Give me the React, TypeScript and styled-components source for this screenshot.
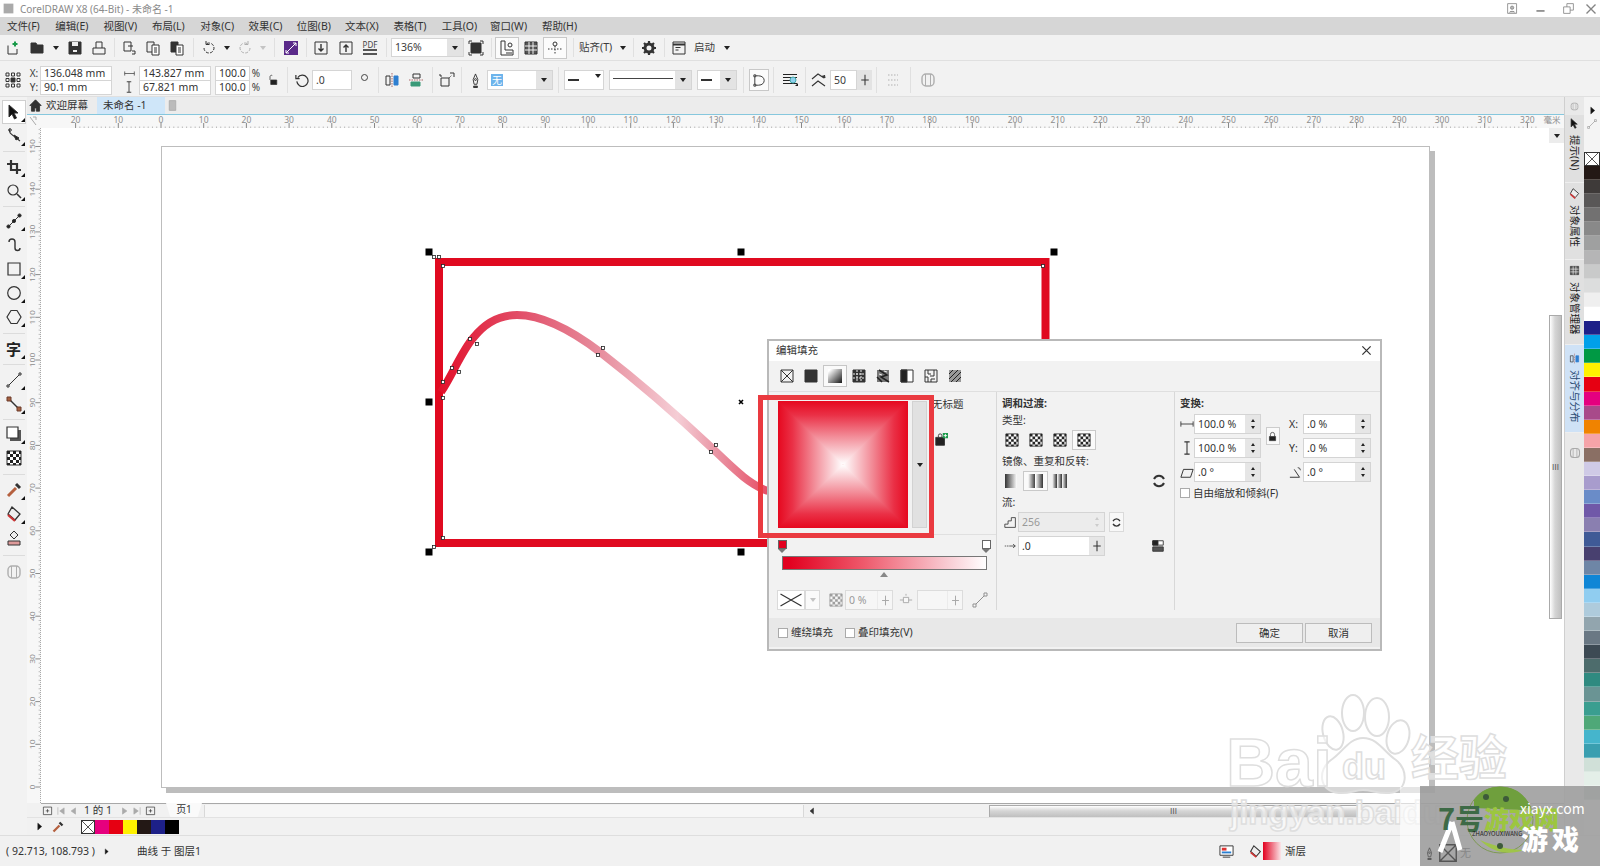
import React, { ReactNode } from "react";
import styled, { createGlobalStyle } from "styled-components";

const Global = createGlobalStyle`
  html, body { margin: 0; padding: 0; background: #fff; overflow: hidden; }
  #root { width: 1600px; height: 866px; }
  * { box-sizing: border-box; }
`;

const FONT = `"Noto Sans", "Noto Sans CJK SC", sans-serif`;

const App_ = styled.div`
  position: relative; width: 1600px; height: 866px; overflow: hidden;
  display: flex; flex-direction: column;
  font: 10.5px/1.2 ${FONT}; color: #3c3c3c; background: #f1f1f1;
`;

/* ------- icons ------- */
const G: Record<string, ReactNode> = {
  app: <path d="M2 2h12v12H2z" fill="#aaa" stroke="none" />,
  new: <><path d="M3 5.5V14h9V9" /><path d="M10 1.5v5M7.5 4h5" stroke="#1a9a4a" strokeWidth="2" /></>,
  open: <path d="M2 13V3h5l1 2h6v8z" fill="#333" />,
  save: <><path d="M2 2h12v12H2z" fill="#333" /><path d="M5 2h6v4H5z" fill="#eee" stroke="none" /><path d="M6 10h4v2H6z" fill="#eee" stroke="none" /></>,
  print: <><path d="M5 8V2h6v6" /><path d="M2 8h12v6H2z" /></>,
  cut: <><path d="M3 2h7v9H3z" /><path d="M7 6h5" /><path d="M11 11h3v3h-3" /></>,
  copy: <><path d="M2 2h7v10H2z" fill="#eee" /><path d="M7 5h7v10H7z" fill="#fff" /><path d="M9 8h3M9 10h3M9 12h3" /></>,
  paste: <><path d="M2 2h7v10H2z" fill="#333" /><path d="M7 5h7v10H7z" fill="#fff" /><path d="M9 8h3M9 10h3M9 12h3" /></>,
  undo: <><path d="M3 8a5 5 0 1 0 2-4" strokeDasharray="3 1.4" /><path d="M5 1v3.5H8.5" /></>,
  redo: <g opacity=".35"><path d="M13 8a5 5 0 1 1-2-4" strokeDasharray="3 1.4" /><path d="M11 1v3.5H7.5" /></g>,
  purple: <><path d="M1 1h14v14H1z" fill="#5a2a8a" stroke="none" /><path d="M3 13l10-10M10 3h3v3M3 10v3h3" stroke="#fff" /></>,
  imp: <><path d="M2 2h12v12H2z" /><path d="M8 4v7M5.5 8.5L8 11l2.5-2.5" strokeWidth="1.4" /></>,
  exp: <><path d="M2 2h12v12H2z" /><path d="M8 12V5M5.5 7.5L8 5l2.5 2.5" strokeWidth="1.4" /></>,
  full: <><path d="M3 3h10v10H3z" fill="#333" /><path d="M1 4V1h3M12 1h3v3M15 12v3h-3M4 15H1v-3" /></>,
  rulers: <><path d="M2 1v14h12v-5H6V1z" /><path d="M8 12v2M10 12v2M12 12v2" /><circle cx="11" cy="5" r="2" /></>,
  grid: <><path d="M2 2h12v12H2z" fill="#555" /><path d="M6 2v12M10 2v12M2 6h12M2 10h12" stroke="#f2f2f2" /></>,
  guides: <><path d="M1 9h14M8 6v9" strokeDasharray="1.5 1.5" /><circle cx="8" cy="4" r="2" /></>,
  gear: <><circle cx="8" cy="8" r="4" strokeWidth="3" /><path d="M8 1v2M8 13v2M1 8h2M13 8h2M3 3l1.5 1.5M11.5 11.5L13 13M13 3l-1.5 1.5M4.5 11.5L3 13" strokeWidth="2.2" /></>,
  launch: <><path d="M2 2h12v12H2z" /><path d="M2 4.5h12" strokeWidth="2" /><path d="M4.5 7.5h5M4.5 10h3" /></>,
  origin: <><path d="M1 1h3v3H1zM6.5 1h3v3h-3zM12 1h3v3h-3zM1 6.5h3v3H1zM12 6.5h3v3h-3zM1 12h3v3H1zM6.5 12h3v3h-3zM12 12h3v3h-3z" /><path d="M6 6h4v4H6z" fill="#333" /></>,
  wArrow: <path d="M1 5v6M15 5v6M1 8h14" />,
  hArrow: <path d="M5 1h6M5 15h6M8 1v14" strokeWidth="1.2" />,
  unlock: <><path d="M4 8V4a2 2 0 0 1 3-2" /><path d="M5 8h8v6H5z" fill="#222" /></>,
  lock: <><path d="M5 8V5a3 3 0 0 1 6 0v3" /><path d="M3.5 8h9v6h-9z" fill="#222" /></>,
  rotate: <><path d="M4 5a6 6 0 1 1-1 4" strokeWidth="1.3" /><path d="M2 2v4h4" strokeWidth="1.3" /></>,
  mirH: <><path d="M2 4h4v9H2z" /><path d="M10 4h4v9h-4z" fill="#2f7fd0" stroke="#2f7fd0" /><path d="M8 1v14" strokeDasharray="1.5 1" stroke="#a66" /></>,
  mirV: <><path d="M5 2h7v4H5z" /><path d="M3 10h9v4H3z" fill="#3a9a78" stroke="#3a9a78" /><path d="M1 8h14" strokeDasharray="1.5 1" stroke="#a66" /></>,
  conv: <><path d="M2 6h8v8H2z" /><path d="M11 1h4v4M1 2v2h2" /><path d="M10 6l3-3" strokeDasharray="1 1" /></>,
  pen: <><path d="M8 1l2.5 6-1 5h-3l-1-5z" /><path d="M6 14h4v1.5H6z" fill="#333" /><circle cx="8" cy="7" r="1" /></>,
  end: <><path d="M3 3h4c4 0 6 2.5 6 5s-2 5-6 5H3z" /><path d="M2 2h2v2H2zM2 12h2v2H2z" fill="#eee" /></>,
  wrap: <><path d="M1 2.5h14M1 5.5h14M1 8.5h8M1 11.5h14" stroke="#222" /><circle cx="11" cy="8" r="3" fill="#8fd0ee" stroke="#4aa" /><path d="M13 14h3v-3z" fill="#222" stroke="none" /></>,
  curve: <><path d="M1 7l6-5 6 4" strokeWidth="1.1" /><path d="M1 14l6-5 7 5" strokeWidth="1.1" /><path d="M11 4l3 2-.5-3" fill="#333" /></>,
  plusV: <path d="M8 1v14M3 8h10" strokeWidth="1.4" />,
  dots: <g opacity=".35" strokeDasharray="1.5 1.5"><path d="M3 3h10M3 8h10M3 13h10" /></g>,
  cyl: <g opacity=".35"><rect x="2" y="2" width="12" height="12" rx="4" strokeWidth="1.4" /><path d="M5.5 2v12M10.5 2v12" /></g>,
  pointer: <path d="M3 1l9 8H8l2.5 5-2 1L6 10l-3 3z" fill="#111" />,
  shape: <><path d="M4 1c-2 3 1 5 5 8l5 4" strokeWidth="1.1" /><circle cx="4" cy="2" r="1.3" /><path d="M8 7l5 3-3 2z" fill="#222" /></>,
  crop: <path d="M5 1v10h10M1 5h10v10" strokeWidth="2.2" />,
  zoom: <><circle cx="7" cy="7" r="5" strokeWidth="1.2" /><path d="M11 11l4 4" strokeWidth="1.6" /></>,
  bez: <><path d="M2 14L14 2" /><circle cx="2.5" cy="13.5" r="1.6" fill="#222" /><circle cx="8" cy="8" r="1.6" fill="#222" /><circle cx="13.5" cy="2.5" r="1.6" fill="#222" /></>,
  art: <path d="M3 5a3 3 0 0 1 6 0v6a2.5 2.5 0 0 0 5 0" strokeWidth="1.4" />,
  rect: <><path d="M2 2h12v12H2z" strokeWidth="1.2" /></>,
  ell: <circle cx="8" cy="8" r="6.3" strokeWidth="1.2" />,
  poly: <path d="M5 1.5h6L15 8l-4 6.5H5L1 8z" strokeWidth="1.2" />,
  line: <><path d="M2 14L14 2" /><path d="M1 13h2v2H1zM13 1h2v2h-2z" fill="#fff" /></>,
  conn: <><path d="M3 3l10 10" strokeWidth="1.4" /><path d="M1 1h4v4H1zM11 11h4v4h-4z" fill="#a5603f" stroke="#6b3a2a" /></>,
  shadow: <><path d="M4 4h11v11H4z" fill="#555" stroke="none" /><path d="M1 1h11v11H1z" fill="#fff" strokeWidth="1.2" /></>,
  checker: <><path d="M1 1h14v14H1z" fill="#fff" /><path d="M1 1h3v3H1zM7 1h3v3H7zM13 1h2v3h-2zM4 4h3v3H4zM10 4h3v3h-3zM1 7h3v3H1zM7 7h3v3H7zM13 7h2v3h-2zM4 10h3v3H4zM10 10h3v3h-3zM1 13h3v2H1zM7 13h3v2H7zM13 13h2v2h-2z" fill="#222" stroke="none" /></>,
  dropper: <><path d="M2 14l8-8" stroke="#b5603f" strokeWidth="3" /><path d="M10 2l4 4" strokeWidth="3" stroke="#333" /></>,
  fill: <><path d="M6 1l8 7-5 6-7-6z" fill="#eee" strokeWidth="1.3" /><path d="M2 9l7 6" stroke="#c33" strokeWidth="2.2" /></>,
  smart: <><path d="M8 1l4 4-4 4-4-4z" fill="#eee" /><path d="M2 11h12v4H2z" fill="#d99" /></>,
  x: <path d="M2 2h12v12H2zM2 2l12 12M14 2L2 14" />,
  solid: <path d="M2 2h12v12H2z" fill="#333" />,
  pattern: <><path d="M2 2h12v12H2z" fill="#333" /><path d="M2 6h12M2 10h12" stroke="#eee" strokeDasharray="2 1" /><path d="M6 2v12M10 2v12" stroke="#eee" strokeDasharray="2 1" /></>,
  bitmap: <><path d="M2 2h12v12H2z" fill="#777" stroke="none" /><path d="M4 2l8 5-6 2 8 5M2 9l5 5" stroke="#222" strokeWidth="1.5" /><path d="M9 3l3 1M4 6l3 1" stroke="#eee" /></>,
  half: <><path d="M2 2h12v12H2z" fill="#fff" /><path d="M2 2h6v12H2z" fill="#222" /></>,
  maze: <><path d="M2 2h12v12H2z" /><path d="M5 2v4h3M11 2v6H7M2 9h3v5M8 14v-3h4" /></>,
  hatch: <><path d="M2 2h12v12H2z" fill="#999" stroke="none" /><path d="M2 6l4-4M2 11l9-9M4 14L14 4M9 14l5-5" stroke="#222" /></>,
  spinCircle: <><path d="M3 6a5.5 5.5 0 0 1 10 0" strokeWidth="2" /><path d="M13 10a5.5 5.5 0 0 1-10 0" strokeWidth="2" /></>,
  blend: <><path d="M2 2h12v5H2z" fill="#fff" /><path d="M2 2h6v5H2z" fill="#222" /><path d="M2 9h12v5H2z" fill="#555" /></>,
  steps: <path d="M1 14V10h4V6h4V2h5v12z" />,
  flow: <path d="M1 8h2M4 8h2M7 8h8M12 5.5L15 8l-3 2.5" />,
  skew: <path d="M4 5h11l-3 9H1z" strokeWidth="1.1" />,
  ang: <><path d="M1 14h11L6 5" strokeWidth="1.1" /><path d="M10 3a3 3 0 0 1 3 3" /></>,
  node: <><path d="M1 8h14" /><path d="M5 5h6v6H5z" fill="#fff" /><path d="M8 1v2" /></>,
  tie: <g opacity=".5"><path d="M2 14L14 2" /><path d="M1 12h3v3H1zM12 1h3v3h-3z" fill="#fff" /></g>,
  bag: <><path d="M2 5h10v9H2z" fill="#222" /><path d="M5 5V3a2 2 0 0 1 4 0v2" /><path d="M10 0h6v6h-6z" fill="#1a9a4a" stroke="none" /><path d="M13 1v4M11 3h4" stroke="#fff" /></>,
  home: <path d="M8 1L1 8h2v7h4v-4h2v4h4V8h2z" fill="#333" />,
  tabBox: <path d="M4 2h8v12H4z" fill="#bbb" stroke="#aaa" />,
  user: <><path d="M2 2h11v12H2z" /><circle cx="7.5" cy="7" r="2" fill="#888" /><path d="M4 13c0-2 7-2 7 0" fill="#888" /></>,
  min: <path d="M3 11h10" strokeWidth="2" />,
  restore: <><path d="M6 2h8v8H6z" /><path d="M2 6h8v8H2z" fill="#fff" /></>,
  close: <path d="M2 2l12 12M14 2L2 14" strokeWidth="1.8" />,
  cross: <path d="M1 4l14 8M15 4L1 12" strokeWidth=".8" />,
  navAdd: <><path d="M2 3h12v11H2z" /><path d="M8 6v5M5.5 8.5h5" /></>,
  first: <path d="M3 2v12M13 3L6 8l7 5z" fill="#aaa" stroke="#aaa" />,
  prev: <path d="M12 3L5 8l7 5z" fill="#aaa" stroke="#aaa" />,
  next: <path d="M4 3l7 5-7 5z" fill="#aaa" stroke="#aaa" />,
  last: <path d="M13 2v12M3 3l7 5-7 5z" fill="#aaa" stroke="#aaa" />,
  right: <path d="M5 2l7 6-7 6z" fill="#111" />,
  left: <path d="M11 2L4 8l7 6z" fill="#333" />,
  monitor: <><path d="M1 2h14v10H1z" fill="#fff" stroke="#333" /><path d="M3 4h5v3H3z" fill="#d33" stroke="none" /><path d="M3 8h10v2H3z" fill="#2a7fd0" stroke="none" /><path d="M4 14h8" /></>,
};

const Svg = styled.svg<{ $s: number; $m: string }>`
  width: ${p => p.$s}px; height: ${p => p.$s}px; flex: none; display: block;
  margin: ${p => p.$m};
  fill: none; stroke: #333; stroke-width: 1;
`;
const Icon = ({ n, s = 16, m = "0" }: { n: string; s?: number; m?: string }) => (
  <Svg $s={s} $m={m} viewBox="0 0 16 16">{G[n]}</Svg>
);

/* ------- title & menu ------- */
const TitleBar = styled.div`
  height: 17px; background: #fff; display: flex; align-items: center; padding-left: 2px; color: #8a8a8a; font-size: 10px;
  span { margin-left: 5px; flex: 1; }
`;
const WinBtn = styled.div<{ $w: number }>`
  width: ${p => p.$w}px; display: flex; justify-content: center; align-items: center; opacity: .6;
`;
const MenuBar = styled.div`
  height: 18px; background: #d6d6d6; display: flex; align-items: center; padding-left: 7px; font-size: 10.5px; color: #333;
`;
const MenuItem = styled.div`
  width: 48.3px; white-space: nowrap;
  &:nth-last-child(2) { width: 52px; }
`;

/* ------- toolbars ------- */
const Toolbar = styled.div<{ $h: number; $pt?: number }>`
  height: ${p => p.$h}px; background: #f2f2f2; display: flex; align-items: center; padding: ${p => p.$pt ?? 0}px 0 0 1px;
  border-bottom: 1px solid #e0e0e0; flex: none;
`;
const Btn = styled.div<{ $w?: number; $on?: boolean }>`
  width: ${p => p.$w ?? 24}px; height: 22px; flex: none; display: flex; align-items: center; justify-content: center;
  box-sizing: border-box;
  ${p => p.$on ? "background:#fbfbfb; box-shadow: inset 0 0 0 1px #c8c8c8;" : ""}
`;
const Caret = styled.i<{ $w?: number; $off?: boolean }>`
  width: ${p => p.$w ?? 12}px; flex: none; position: relative; height: 10px; display: block;
  &::after { content: ""; position: absolute; left: 50%; top: 3px; margin-left: -3px;
    border: 3px solid transparent; border-top: 4px solid ${p => p.$off ? "#c4c4c4" : "#222"}; border-bottom: 0; }
`;
const Sep = styled.i<{ $w: number; $none?: boolean }>`
  width: ${p => p.$w}px; flex: none; align-self: stretch; margin: 3px 0; display: block;
  background: ${p => p.$none ? "none" : "linear-gradient(#e0e0e0,#e0e0e0) center/1px 100% no-repeat"};
`;
const TbText = styled.span<{ $w: number; $ml?: number }>`
  width: ${p => p.$w}px; margin-left: ${p => p.$ml ?? 0}px; flex: none; font-size: 10.5px; white-space: nowrap;
`;
const Combo = styled.div<{ $w: number; $h?: number }>`
  width: ${p => p.$w}px; height: ${p => p.$h ?? 19}px; flex: none; display: flex; background: #fff;
  border: 1px solid #d5d5d5; font-size: 10.5px; align-items: stretch;
`;
const ComboText = styled.div`flex: 1; display: flex; align-items: center; padding-left: 3px; min-width: 0;`;
const ComboDrop = styled.div`
  width: 16px; background: #e3e3e3; display: flex; align-items: center; justify-content: center;
`;
const NoneChip = styled.span`background: #6db4ec; color: #fff; font-size: 10px; padding: 0 1px;`;
const Dash = styled.i`width: 11px; height: 2px; background: #333; display: block;`;
const LinePreview = styled.i`flex: 1; height: 1px; background: #444; display: block; margin: -4px 2px 0 0;`;
const Stack = styled.div<{ $w: number }>`
  width: ${p => p.$w}px; flex: none; display: flex; flex-direction: column;
`;
const StackLabel = styled.div`height: 14px; line-height: 14px; font-size: 10px; text-align: center; display: flex; justify-content: center; align-items: center;`;
const StackInput = styled.div`
  height: 15px; background: #fff; border: 1px solid #d5d5d5; margin-top: -1px; padding-left: 3px; line-height: 13px;
  font-size: 10.5px; white-space: nowrap; color: #333;
  &:first-child { margin-top: 0; }
`;
const PropInput = styled.div<{ $w: number }>`
  width: ${p => p.$w}px; height: 20px; background: #fff; border: 1px solid #d5d5d5; line-height: 18px; padding-left: 3px; flex: none; font-size: 10.5px;
`;
const PlusBox = styled.div`
  width: 15px; height: 20px; background: #e3e3e3; flex: none; display: flex; align-items: center; justify-content: center;
`;
const DegMark = styled.i`width: 7px; height: 7px; border: 1px solid #444; border-radius: 50%; display: block; margin-top: -6px;`;

/* ------- work area ------- */
const Work = styled.div`flex: 1; display: flex; min-height: 0;`;
const Toolbox = styled.div`
  width: 27px; flex: none; background: #f2f2f2; padding-top: 3px; display: flex; flex-direction: column; align-items: center;
`;
const ToolBtn = styled.div<{ $on?: boolean; $fly?: boolean }>`
  position: relative; width: 24px; height: 24px; flex: none; display: flex; align-items: center; justify-content: center;
  font-size: 15px; font-weight: 700; color: #222;
  ${p => p.$on ? "background:#fff; box-shadow: inset 0 0 0 1px #cfcfcf;" : ""}
  ${p => p.$fly ? `&::after { content:""; position:absolute; right:1px; bottom:2px; border-left:4px solid transparent; border-bottom:4px solid #111; }` : ""}
`;
const ToolSep = styled.i<{ $h: number }>`
  height: ${p => p.$h}px; width: 22px; flex: none; display: block;
  background: linear-gradient(#dcdcdc,#dcdcdc) center/100% 1px no-repeat;
`;
const Center = styled.div`
  flex: 1; min-width: 0; display: flex; flex-direction: column; border-right: 1px solid #cfcfcf;
`;
const TabBar = styled.div`
  height: 18px; background: #ececec; border-bottom: 1px solid #86c7dd; display: flex; align-items: center; flex: none;
`;
const DocTab = styled.div<{ $on?: boolean }>`
  height: 17px; display: flex; align-items: center; font-size: 10.5px; color: #333;
  ${p => p.$on ? "background:#cfe6f9; width: 68px; margin-left: 9px; padding-left: 6px" : "padding-left: 2px;"}
`;
const RulerRow = styled.div`height: 13px; flex: none; display: block; background: #f7f7f7;`;
const RulerSvg = styled.svg`
  display: block; width: 100%; height: 100%;
  text { font: 8.5px ${FONT}; fill: #8d8d8d; stroke: none; }
`;
const CanvasRow = styled.div`flex: 1; display: flex; min-height: 0; background: #fff;`;
const VRuler = styled.div`width: 14px; flex: none; background: #f7f7f7; border-right: 1px dotted #aaa;`;
const Canvas = styled.div`position: relative; flex: 1; min-width: 0; overflow: visible; background: #fff;`;
const VScroll = styled.div`
  width: 15px; flex: none; background: #fff; display: flex; flex-direction: column; align-items: stretch;
`;
const ScrollUp = styled.div`
  height: 15px; background: #ececec; display: flex; align-items: center; justify-content: center; margin-bottom: 172px;
`;
const ScrollThumb = styled.div`
  height: 304px; width: 13px; border: 1px solid #aaa;
  background: linear-gradient(90deg,#fff,#d5d5d5 45%,#c0c0c0);
  display: flex; align-items: center; justify-content: center; font-size: 8px; color: #555;
`;
const Page = styled.div`
  position: absolute; left: 120px; top: 18px; width: 1269px; height: 642px; background: #fff;
  border: 1px solid #bdbdbd; box-shadow: 5px 5px 0 #bdbdbd;
`;
const DrawingSvg = styled.svg`position: absolute; inset: 0; width: 100%; height: 100%; overflow: visible;`;

/* nav row */
const NavRow = styled.div`
  height: 14px; flex: none; background: #f1f1f1; border-top: 1px solid #a8a8a8; display: flex; align-items: center; margin-left: 14px; padding-left: 1px;
  font-size: 10.5px; color: #333;
`;
const PageTab = styled.div`
  width: 36px; height: 14px; margin-left: 10px; margin-top: -1px; background: #fafafa; text-align: center; line-height: 12px;
  clip-path: polygon(0 0, 100% 0, 88% 100%, 12% 100%); font-size: 10px;
`;
const HTrack = styled.div`
  width: 600px; height: 12px; margin-left: 2px; background: #f6f6f6; border: 1px solid #d8d8d8; border-width: 0 1px;
`;
const HArrow = styled.div`width: 16px; display: flex; justify-content: center;`;
const HThumbTrack = styled.div`flex: 1; height: 14px; padding-left: 169px; min-width: 0;`;
const HThumb = styled.div`
  width: 369px; height: 13px; border: 1px solid #aaa; background: linear-gradient(#fff,#d5d5d5 45%,#bfbfbf);
  font-size: 8px; text-align: center; line-height: 10px; color: #555; margin-top: 1px;
`;
const DocPal = styled.div`
  height: 18px; flex: none; background: #f1f1f1; border-top: 1px solid #e2e2e2; display: flex; align-items: center; padding-left: 8px;
`;
const Swatch = styled.i<{ $c: string }>`
  width: 14px; height: 14px; background: ${p => p.$c}; display: block; flex: none;
`;
const XSwatch = styled.div`width: 14px; height: 14px; border: 1px solid #333; flex: none; background:
  linear-gradient(45deg,transparent 48%,#555 48%,#555 52%,transparent 52%),
  linear-gradient(-45deg,transparent 48%,#555 48%,#555 52%,transparent 52%), #fff;`;

/* docker + palette */
const Docker = styled.div`
  width: 19px; flex: none; background: #e9e9e9; display: flex; flex-direction: column; align-items: center;
`;
const DockTop = styled.div`height: 18px; flex: none; display: flex; align-items: center; justify-content: center;`;
const DockTab = styled.div<{ $h: number; $on?: boolean }>`
  height: ${p => p.$h}px; width: 100%; flex: none; padding-top: 3px; display: flex; flex-direction: column; align-items: center; gap: 1px;
  background: ${p => p.$on ? "#cfe2f6" : "#e0e0e0"}; border-bottom: 1px solid #eee;
  color: ${p => p.$on ? "#2a4a72" : "#222"};
`;
const DockText = styled.div`
  writing-mode: vertical-rl; text-orientation: sideways; font-size: 10.5px; line-height: 14px; white-space: nowrap; margin-top: 5px;
`;
const DockCyl = styled.div`margin-top: 14px;`;
const Palette = styled.div`width: 16px; flex: none; background: #f4f4f4; display: flex; flex-direction: column;`;
const PalTop = styled.div`height: 55px; flex: none; display: flex; flex-direction: column; align-items: center; padding-top: 9px; gap: 4px;`;
const PalX = styled(XSwatch)`width: 16px; height: 14px;`;
const PalCell = styled.i<{ $c: string }>`
  height: 14.1px; flex: none; display: block; background: ${p => p.$c}; border-bottom: 1px solid rgba(255,255,255,.25);
`;

/* status */
const Status = styled.div`
  height: 31px; flex: none; background: #f1f1f1; border-top: 1px solid #dedede; display: flex; align-items: center; padding-left: 6px; font-size: 10.5px; color: #333;
`;
const StatusSwatch = styled.i`width: 18px; height: 18px; display: block; flex: none; background: linear-gradient(90deg,#e2001f,#fbe4e7);`;
const StatusText = styled.span<{ $w: number; $ml?: number }>`
  width: ${p => p.$w}px; margin-left: ${p => p.$ml ?? 0}px; flex: none; white-space: nowrap;
`;

/* ------- dialog ------- */
const Dialog = styled.div`
  position: absolute; left: 726px; top: 211px; width: 615px; height: 312px;
  border: 2px solid #b9b9b9; background: #f2f2f2; display: flex; flex-direction: column; font-size: 10.5px; color: #333;
`;
const DlgTitle = styled.div`
  height: 20px; flex: none; background: #fff; display: flex; align-items: center; justify-content: space-between; padding: 0 8px 2px 7px;
`;
const TypeRow = styled.div`
  height: 31px; flex: none; display: flex; align-items: center; padding-left: 6px; border-bottom: 1px solid #dfdfdf;
`;
const TypeBtn = styled.div<{ $on?: boolean }>`
  width: 24px; height: 22px; display: flex; align-items: center; justify-content: center; flex: none;
  ${p => p.$on ? "background:#fafafa; box-shadow: inset 0 0 0 1px #c6c6c6;" : ""}
`;
const DlgBody = styled.div`flex: 1; display: grid; grid-template-columns: 228px 178px 1fr; min-height: 0;`;
const LeftCol = styled.div`border-right: 1px solid #d8d8d8; margin-bottom: 9px; display: flex; flex-direction: column;`;
const PreviewRow = styled.div`display: flex; padding: 9px 0 0 9px; height: 143px; border-bottom: 1px solid #e0e0e0; flex: none;`;
const PreviewSvg = styled.svg`width: 130px; height: 127px; display: block; flex: none; background: #e6081f;`;
const PreviewDrop = styled.div`
  width: 15px; height: 127px; margin-left: 4px; background: #e1e1e1; border: 1px solid #d2d2d2; display: flex; align-items: center; justify-content: center; flex: none;
`;
const PresetInfo = styled.div`margin: -3px 0 0 5px; display: flex; flex-direction: column; gap: 22px;`;
const StopsRow = styled.div`display: flex; justify-content: space-between; padding: 5px 5px 0 9px; height: 21px; flex: none;`;
const Stop = styled.div<{ $c: string }>`
  width: 9px; height: 9px; background: ${p => p.$c}; border: 1px solid #666; position: relative;
  &::after { content: ""; position: absolute; left: -1px; top: 8px; border: 4px solid transparent; border-top: 4px solid #777; border-bottom: 0; }
`;
const GradBar = styled.div`
  height: 14px; margin: 0 9px 0 13px; flex: none; border: 1px solid #777; background: linear-gradient(90deg,#e2001f 3%,#ee5a6c 40%,#f8c8d0 80%,#fff);
`;
const MidTri = styled.i`
  display: block; width: 0; flex: none; margin: 2px 0 0 111px; border: 4px solid transparent; border-bottom: 5px solid #888; border-top: 0;
`;
const LowRow = styled.div`display: flex; align-items: center; height: 20px; margin-top: 13px; padding-left: 8px; flex: none; color: #999;`;
const LowBox = styled.div<{ $w: number; $ml?: number; $bg?: string }>`
  width: ${p => p.$w}px; height: 20px; margin-left: ${p => p.$ml ?? 0}px; flex: none; background: ${p => p.$bg ?? "#fafafa"};
  border: 1px solid #dadada; display: flex; align-items: center; justify-content: center;
`;
const LowField = styled.div<{ $w: number; $ml?: number }>`
  width: ${p => p.$w}px; height: 20px; margin-left: ${p => p.$ml ?? 0}px; flex: none; background: #f6f6f6;
  border: 1px solid #dcdcdc; display: flex; align-items: stretch;
`;
const LowFieldText = styled.div`flex: 1; padding-left: 3px; line-height: 18px; white-space: nowrap;`;
const LowFieldPlus = styled.div`width: 15px; flex: none; border-left: 1px solid #dcdcdc; display: flex; align-items: center; justify-content: center; opacity: .4;`;
const Dim = styled.div`opacity: .4; flex: none;`;
const MidCol = styled.div`border-right: 1px solid #d8d8d8; margin-bottom: 9px; padding: 5px 0 0 5px; display: flex; flex-direction: column;`;
const RightCol = styled.div`padding: 5px 0 0 5px; display: flex; flex-direction: column;`;
const ColHead = styled.div`font-weight: 700; line-height: 13px; height: 13px; flex: none;`;
const Sub = styled.div<{ $mt: number }>`line-height: 13px; height: 13px; margin-top: ${p => p.$mt}px; flex: none;`;
const IconRow = styled.div<{ $mt?: number; $ml?: number }>`
  display: flex; align-items: center; margin-top: ${p => p.$mt ?? 0}px; margin-left: ${p => p.$ml ?? 0}px; flex: none;
`;
const SmallBtn = styled.div<{ $on?: boolean; $w?: number }>`
  width: ${p => p.$w ?? 24}px; height: 20px; display: flex; align-items: center; justify-content: center; flex: none;
  ${p => p.$on ? "background:#fafafa; box-shadow: inset 0 0 0 1px #c9c9c9;" : ""}
`;
const Pad = styled.i<{ $w: number }>`width: ${p => p.$w}px; display: block; flex: none;`;
const Spin = styled.div<{ $w: number; $off?: boolean }>`
  width: ${p => p.$w}px; height: 20px; display: flex; flex: none; border: 1px solid #d4d4d4; background: ${p => p.$off ? "#ececec" : "#fff"};
  color: ${p => p.$off ? "#999" : "#333"};
`;
const SpinText = styled.div`flex: 1; padding-left: 3px; line-height: 18px; white-space: nowrap; min-width: 0;`;
const SpinBtns = styled.div<{ $off?: boolean }>`
  width: 15px; flex: none; background: ${p => p.$off ? "#ececec" : "#e6e6e6"}; display: flex; flex-direction: column; align-items: center; justify-content: center; gap: 4px;
  &::before { content: ""; border: 2.5px solid transparent; border-bottom: 3px solid ${p => p.$off ? "#ccc" : "#222"}; border-top: 0; }
  &::after { content: ""; border: 2.5px solid transparent; border-top: 3px solid ${p => p.$off ? "#ccc" : "#222"}; border-bottom: 0; }
`;
const SpinPlus = styled.div`width: 15px; flex: none; background: #e6e6e6; display: flex; align-items: center; justify-content: center;`;
const XformWrap = styled.div`margin-top: 5px;`;
const XformGrid = styled.div`
  display: grid; grid-template-columns: 14px 67px 23px 19px 68px; grid-auto-rows: 20px; row-gap: 4px; margin-top: -1px; align-items: center;
`;
const LockCell = styled.div`
  grid-column: 3; grid-row: 1 / span 2; justify-self: center; width: 14px; height: 18px; background: #fafafa; border: 1px solid #ccc;
  display: flex; align-items: center; justify-content: center;
`;
const XLabel = styled.div`text-align: center; font-size: 10.5px;`;
const CheckRow = styled.label<{ $mt?: number; $ml?: number }>`
  display: flex; align-items: center; gap: 3px; margin-top: ${p => p.$mt ?? 0}px; margin-left: ${p => p.$ml ?? 0}px; white-space: nowrap;
`;
const Check = styled.i`width: 10px; height: 10px; border: 1px solid #aaa; background: #fff; display: block; flex: none;`;
const DlgFoot = styled.div`
  height: 29px; flex: none; background: #e8e8e8; display: flex; align-items: center; padding: 0 8px 0 9px; margin-bottom: 2px;
`;
const FootBtn = styled.div`
  width: 67px; height: 20px; border: 1px solid #bcbcbc; background: #efefef; text-align: center; line-height: 18px; margin-left: 2px;
`;
const Grow = styled.div`flex: 1;`;
const Highlight = styled.div`
  position: absolute; left: -11px; top: 54px; width: 176px; height: 143px; border: 5px solid #ea3a40; pointer-events: none;
`;
const PdfMark = styled.span`font-size: 8px; line-height: 8px; border-bottom: 6px double #555; color: #444;`;
const GradChip = styled.i`width: 14px; height: 14px; display: block; background: linear-gradient(135deg,#fff 10%,#222 95%);`;
const GradMini = styled.i`width: 12px; height: 14px; display: block; background: linear-gradient(90deg,#333,#fff);`;
const StripeMini = styled.i<{ $n: number }>`
  width: 15px; height: 14px; display: block;
  background: repeating-linear-gradient(90deg,#fff 0,#333 ${p => 15 / p.$n}px);
`;

/* ------- watermarks ------- */
const Mark = styled.div`position: absolute; inset: 0; pointer-events: none;`;
const Ghost = styled.div<{ $x: number; $y: number; $fs: number }>`
  position: absolute; left: ${p => p.$x}px; top: ${p => p.$y}px; font: 700 ${p => p.$fs}px/1 "Liberation Sans", "Noto Sans CJK SC", sans-serif;
  color: rgba(255,255,255,.55); -webkit-text-stroke: 1.5px #dedede; white-space: nowrap;
`;
const WmFade = styled.div`position: absolute; left: 1400px; top: 787px; width: 20px; height: 79px; background: rgba(255,255,255,.6);`;
const WmBox = styled.div`position: absolute; left: 1420px; top: 786px; width: 180px; height: 80px; background: rgba(158,158,158,.9);`;
const LogoSvg = styled.svg`position: absolute; inset: 0; width: 100%; height: 100%;`;
const WmText = styled.div<{ $x: number; $y: number; $fs: number; $c: string; $w?: number; $ls?: number }>`
  position: absolute; left: ${p => p.$x}px; top: ${p => p.$y}px; font-size: ${p => p.$fs}px; line-height: 1; color: ${p => p.$c};
  font-weight: ${p => p.$w ?? 400}; white-space: nowrap; letter-spacing: ${p => p.$ls ?? 0}px;
  font-family: "Noto Sans CJK SC", "Liberation Sans", sans-serif;
`;
const WmDim = styled.div`position: absolute; left: 1423px; top: 842px; display: flex; align-items: center; gap: 1px; color: #7a7a7a; font-size: 11px; opacity: .7;`;

/* ------- data ------- */
const MENUS = ["文件(F)", "编辑(E)", "视图(V)", "布局(L)", "对象(C)", "效果(C)", "位图(B)", "文本(X)", "表格(T)", "工具(O)", "窗口(W)", "帮助(H)"];
const PALETTE = ["#231815", "#3e3a39", "#595757", "#727171", "#898989", "#9fa0a0", "#b5b5b6", "#c9caca", "#dcdddd", "#efefef", "#ffffff", "#1d2088", "#00a0e9", "#009944", "#fff100", "#e60012", "#e4007f", "#a84a8a", "#f08300", "#f5a3a8", "#8a6f64", "#cfcae6", "#a89ccd", "#6a8cc8", "#7058a8", "#8a7fb0", "#3f5a96", "#48406f", "#6e86a6", "#0f86d6", "#90cdf0", "#aecbdc", "#92a5ae", "#6a7884", "#3d4a54", "#4d6c6c", "#2f8a80", "#6a9494", "#3a9e90", "#4fa878", "#45b5cc", "#3a9fb0", "#d0e0d8", "#e4efe8", "#b0c0b4"];
const DOC = ["#e6007e", "#e60012", "#fff100", "#231815", "#1d2088", "#000000"];

const HRulerDraw = () => {
  const items: ReactNode[] = [];
  for (let v = -30; v <= 320; v += 10) {
    const x = 161 - 27 + v * 4.27;
    if (x < 14) continue;
    items.push(<text key={`l${v}`} x={x} y={8} textAnchor="middle">{Math.abs(v)}</text>);
    items.push(<path key={`t${v}`} d={`M${x} 8V13`} stroke="#888" />);
    for (let k = 1; k < 10; k++) {
      const tx = x + k * 4.27;
      if (tx < 1510) items.push(<path key={`m${v}-${k}`} d={`M${tx} 11.5V13`} stroke="#bbb" />);
    }
  }
  return (
    <RulerSvg viewBox="0 0 1537 13" preserveAspectRatio="none">
      <path d="M3 2l6 8M9 2v3M9 2H6" stroke="#aaa" fill="none" />
      {items}
      <text x={1525} y={8} textAnchor="middle">毫米</text>
    </RulerSvg>
  );
};
const VRulerDraw = () => {
  const items: ReactNode[] = [];
  for (let v = 0; v <= 150; v += 10) {
    const y = 787 - 128 - v * 4.27;
    items.push(<text key={`l${v}`} transform={`translate(9 ${y}) rotate(-90)`} textAnchor="middle">{v}</text>);
    items.push(<path key={`t${v}`} d={`M9 ${y}H14`} stroke="#888" />);
    for (let k = 1; k < 10; k++) items.push(<path key={`m${v}-${k}`} d={`M12.5 ${y - k * 4.27}H14`} stroke="#bbb" />);
  }
  return <RulerSvg viewBox="0 0 14 675" preserveAspectRatio="none">{items}</RulerSvg>;
};

const Handle = ({ x, y }: { x: number; y: number }) => <rect x={x - 3.5} y={y - 3.5} width={7} height={7} fill="#000" />;
const Node = ({ x, y }: { x: number; y: number }) => <rect x={x - 1.5} y={y - 1.5} width={3} height={3} fill="#fff" stroke="#222" strokeWidth={0.8} />;

const Drawing = () => (
  <DrawingSvg viewBox="41 128 1508 675" preserveAspectRatio="none">
    <defs>
      <linearGradient id="cg" gradientUnits="userSpaceOnUse" x1="440" y1="0" x2="770" y2="0">
        <stop offset="0" stopColor="#e2112b" />
        <stop offset=".25" stopColor="#e2506a" />
        <stop offset=".47" stopColor="#e68a9a" />
        <stop offset=".72" stopColor="#f5cdd5" />
        <stop offset=".83" stopColor="#ea99a8" />
        <stop offset="1" stopColor="#e64a62" />
      </linearGradient>
    </defs>
    <path d="M439 262H1045.5V543H439Z" fill="none" stroke="#e00a20" strokeWidth="8" />
    <path d="M441 392C452 376 462 350 474 337C486 322 500 315 517 315C545 315 575 333 600 352C640 383 680 418 713 449C735 470 750 485 768 491" fill="none" stroke="url(#cg)" strokeWidth="8" strokeLinecap="butt" />
    <Handle x={429} y={252} /><Handle x={741} y={252} /><Handle x={1054} y={252} />
    <Handle x={429} y={402} />
    <Handle x={429} y={552} /><Handle x={741} y={552} />
    <path d="M739 400l4 4M743 400l-4 4" stroke="#000" strokeWidth="1.6" />
    <Node x={434} y={257} /><Node x={439} y={257} /><Node x={443} y={266} />
    <Node x={443} y={382} /><Node x={443} y={398} /><Node x={452} y={368} /><Node x={459} y={372} />
    <Node x={470} y={339} /><Node x={477} y={344} /><Node x={603} y={348} /><Node x={598} y={355} />
    <Node x={716} y={445} /><Node x={711} y={452} /><Node x={443} y={538} /><Node x={434} y={547} />
    <Node x={1043} y={266} />
  </DrawingSvg>
);

const FILL_STOPS = <><stop offset="0" stopColor="#e6081f" /><stop offset=".22" stopColor="#ea3046" /><stop offset=".55" stopColor="#f28a96" /><stop offset="1" stopColor="#fff" /></>;
const SquareFill = () => (
  <PreviewSvg viewBox="0 0 100 100" preserveAspectRatio="none">
    <defs>
      <linearGradient id="t" x1="0" y1="0" x2="0" y2="1">{FILL_STOPS}</linearGradient>
      <linearGradient id="b" x1="0" y1="1" x2="0" y2="0">{FILL_STOPS}</linearGradient>
      <linearGradient id="l" x1="0" y1="0" x2="1" y2="0">{FILL_STOPS}</linearGradient>
      <linearGradient id="r" x1="1" y1="0" x2="0" y2="0">{FILL_STOPS}</linearGradient>
    </defs>
    <rect width="100" height="50" fill="url(#t)" />
    <rect y="50" width="100" height="50" fill="url(#b)" />
    <polygon points="0,0 0,100 50,50" fill="url(#l)" />
    <polygon points="100,0 100,100 50,50" fill="url(#r)" />
  </PreviewSvg>
);

const Watermarks = () => (
  <Mark>
    <LogoSvg viewBox="0 0 1600 866">
      <g fill="rgba(255,255,255,.4)" stroke="#dedede" strokeWidth="2">
        <ellipse cx="1353" cy="713" rx="11" ry="18" />
        <ellipse cx="1377" cy="717" rx="12" ry="19" />
        <ellipse cx="1333" cy="733" rx="10" ry="17" transform="rotate(-15 1333 733)" />
        <ellipse cx="1398" cy="737" rx="11" ry="17" transform="rotate(15 1398 737)" />
        <path d="M1363 738c-14 0-20 14-32 22-14 10-12 32 8 33 10 1 16-3 24-3s16 4 26 3c19-1 20-23 7-33-12-8-18-22-33-22z" />
      </g>
    </LogoSvg>
    <Ghost $x={1226} $y={728} $fs={68}>Bai</Ghost>
    <Ghost $x={1342} $y={749} $fs={36}>du</Ghost>
    <Ghost $x={1411} $y={735} $fs={48}>经验</Ghost>
    <Ghost $x={1230} $y={796} $fs={33}>jingyan.baidu</Ghost>
    <WmFade />
    <WmBox />
    <WmDim>
      <Icon n="pen" s={13} />
      <Icon n="x" s={22} />
      <span>无</span>
    </WmDim>
    <LogoSvg viewBox="0 0 1600 866">
      <circle cx="1500" cy="820" r="33" fill="none" stroke="#7f9a55" strokeWidth="1" />
      <path d="M1474 800c8-12 20-14 30-13 14 1 22 10 27 20l-10 3-47-2z" fill="#6f9f3d" />
      <path d="M1480 840c12 12 28 16 44 10-14 0-30-4-44-10z" fill="#9fc44a" />
      <path d="M1452 822l-12 30M1452 822l8 28" stroke="#fff" strokeWidth="5" fill="none" />
      <circle cx="1486" cy="797" r="3" fill="#3d5a3a" /><circle cx="1506" cy="799" r="3" fill="#3d5a3a" /><circle cx="1500" cy="846" r="3" fill="#3d5a3a" />
    </LogoSvg>
    <WmText $x={1438} $y={803} $fs={29} $c="#3d6a46" $w={700}>7号</WmText>
    <WmText $x={1484} $y={806} $fs={25} $c="#9cc63f" $w={900}>游戏网</WmText>
    <WmText $x={1521} $y={825} $fs={27} $c="#ffffff" $w={900} $ls={4}>游戏</WmText>
    <WmText $x={1520} $y={801} $fs={14} $c="#ffffff">xiayx.com</WmText>
    <WmText $x={1472} $y={831} $fs={6} $c="#222">ZHAOYOUXIWANG</WmText>
  </Mark>
);

export default function App() {
  return (
    <App_>
      <Global />
      <TitleBar>
        <Icon n="app" s={13} />
        <span>CorelDRAW X8 (64-Bit) - 未命名 -1</span>
        <WinBtn $w={16}><Icon n="user" s={13} /></WinBtn>
        <Pad $w={12} />
        <WinBtn $w={16}><Icon n="min" s={13} /></WinBtn>
        <Pad $w={13} />
        <WinBtn $w={14}><Icon n="restore" s={13} /></WinBtn>
        <Pad $w={9} />
        <WinBtn $w={14}><Icon n="close" s={12} /></WinBtn>
        <Pad $w={2} />
      </TitleBar>
      <MenuBar>{MENUS.map(m => <MenuItem key={m}>{m}</MenuItem>)}</MenuBar>

      <Toolbar $h={26}>
        <Btn><Icon n="new" /></Btn><Btn><Icon n="open" /></Btn><Caret $w={14} /><Btn><Icon n="save" /></Btn><Btn><Icon n="print" /></Btn>
        <Sep $w={6} />
        <Btn><Icon n="cut" /></Btn><Btn><Icon n="copy" /></Btn><Btn><Icon n="paste" /></Btn>
        <Sep $w={8} />
        <Btn><Icon n="undo" /></Btn><Caret /><Btn><Icon n="redo" /></Btn><Caret $off />
        <Sep $w={10} />
        <Btn><Icon n="purple" /></Btn>
        <Sep $w={6} />
        <Btn><Icon n="imp" /></Btn><Btn $w={25}><Icon n="exp" /></Btn><Btn><PdfMark>PDF</PdfMark></Btn>
        <Sep $w={9} />
        <Combo $w={73}><ComboText>136%</ComboText><ComboDrop><Caret $w={10} /></ComboDrop></Combo>
        <Btn><Icon n="full" /></Btn>
        <Sep $w={7} />
        <Btn $on><Icon n="rulers" /></Btn><Btn><Icon n="grid" /></Btn><Btn $on><Icon n="guides" /></Btn>
        <Sep $w={12} />
        <TbText $w={38}>贴齐(T)</TbText><Caret $w={12} />
        <Sep $w={8} />
        <Btn><Icon n="gear" /></Btn>
        <Sep $w={6} />
        <Btn><Icon n="launch" /></Btn>
        <TbText $w={27} $ml={3}>启动</TbText><Caret $w={12} />
      </Toolbar>

      <Toolbar $h={36} $pt={3}>
        <Btn><Icon n="origin" /></Btn>
        <Sep $w={3} $none />
        <Stack $w={12}><StackLabel>X:</StackLabel><StackLabel>Y:</StackLabel></Stack>
        <Stack $w={72}><StackInput>136.048 mm</StackInput><StackInput>90.1 mm</StackInput></Stack>
        <Sep $w={9} $none />
        <Stack $w={16}><StackLabel><Icon n="wArrow" s={11} /></StackLabel><StackLabel><Icon n="hArrow" s={12} /></StackLabel></Stack>
        <Sep $w={2} $none />
        <Stack $w={72}><StackInput>143.827 mm</StackInput><StackInput>67.821 mm</StackInput></Stack>
        <Sep $w={4} $none />
        <Stack $w={35}><StackInput>100.0</StackInput><StackInput>100.0</StackInput></Stack>
        <Stack $w={12}><StackLabel>%</StackLabel><StackLabel>%</StackLabel></Stack>
        <Btn $w={22}><Icon n="unlock" s={12} /></Btn>
        <Sep $w={6} />
        <Btn $w={22}><Icon n="rotate" s={15} /></Btn>
        <PropInput $w={40}>.0</PropInput>
        <Btn $w={24}><DegMark /></Btn>
        <Sep $w={4} />
        <Btn $w={23}><Icon n="mirH" /></Btn><Btn $w={25}><Icon n="mirV" /></Btn>
        <Sep $w={8} />
        <Btn $w={22}><Icon n="conv" /></Btn>
        <Sep $w={6} />
        <Btn $w={23}><Icon n="pen" s={15} /></Btn>
        <Combo $w={66} $h={20}><ComboText><NoneChip>无</NoneChip></ComboText><ComboDrop><Caret $w={10} /></ComboDrop></Combo>
        <Sep $w={11} />
        <Combo $w={40} $h={20}><ComboText><Dash /></ComboText><Caret $w={10} /></Combo>
        <Sep $w={5} $none />
        <Combo $w={83} $h={20}><ComboText><LinePreview /></ComboText><ComboDrop><Caret $w={10} /></ComboDrop></Combo>
        <Sep $w={5} $none />
        <Combo $w={40} $h={20}><ComboText><Dash /></ComboText><ComboDrop><Caret $w={10} /></ComboDrop></Combo>
        <Sep $w={12} />
        <Btn $w={20} $on><Icon n="end" s={15} /></Btn>
        <Sep $w={9} />
        <Btn><Icon n="wrap" /></Btn>
        <Sep $w={6} />
        <Btn $w={22}><Icon n="curve" /></Btn>
        <PropInput $w={27}>50</PropInput><PlusBox><Icon n="plusV" s={12} /></PlusBox>
        <Sep $w={9} />
        <Btn><Icon n="dots" /></Btn>
        <Sep $w={11} />
        <Btn><Icon n="cyl" /></Btn>
      </Toolbar>

      <Work>
        <Toolbox>
          <ToolBtn $on $fly><Icon n="pointer" /></ToolBtn>
          <ToolBtn $fly><Icon n="shape" /></ToolBtn>
          <ToolSep $h={7} />
          <ToolBtn $fly><Icon n="crop" /></ToolBtn>
          <ToolBtn $fly><Icon n="zoom" /></ToolBtn>
          <ToolSep $h={6} />
          <ToolBtn $fly><Icon n="bez" /></ToolBtn>
          <ToolBtn><Icon n="art" /></ToolBtn>
          <ToolBtn $fly><Icon n="rect" /></ToolBtn>
          <ToolBtn $fly><Icon n="ell" /></ToolBtn>
          <ToolBtn $fly><Icon n="poly" /></ToolBtn>
          <ToolSep $h={8} />
          <ToolBtn $fly>字</ToolBtn>
          <ToolSep $h={7} />
          <ToolBtn $fly><Icon n="line" /></ToolBtn>
          <ToolBtn $fly><Icon n="conn" /></ToolBtn>
          <ToolSep $h={6} />
          <ToolBtn $fly><Icon n="shadow" /></ToolBtn>
          <ToolBtn><Icon n="checker" /></ToolBtn>
          <ToolSep $h={8} />
          <ToolBtn $fly><Icon n="dropper" /></ToolBtn>
          <ToolBtn $fly><Icon n="fill" /></ToolBtn>
          <ToolBtn><Icon n="smart" /></ToolBtn>
          <ToolSep $h={10} />
          <ToolBtn><Icon n="cyl" /></ToolBtn>
        </Toolbox>

        <Center>
          <TabBar>
            <DocTab><Icon n="home" s={13} m="0 4px 0 0" />欢迎屏幕</DocTab>
            <DocTab $on>未命名 -1</DocTab>
            <Icon n="tabBox" s={13} m="0 0 0 1px" />
          </TabBar>
          <RulerRow><HRulerDraw /></RulerRow>
          <CanvasRow>
            <VRuler><VRulerDraw /></VRuler>
            <Canvas>
              <Page />
              <Drawing />
              <Dialog>
                <DlgTitle>编辑填充<Icon n="close" s={11} /></DlgTitle>
                <TypeRow>
                  <TypeBtn><Icon n="x" /></TypeBtn><TypeBtn><Icon n="solid" /></TypeBtn>
                  <TypeBtn $on><GradChip /></TypeBtn>
                  <TypeBtn><Icon n="pattern" /></TypeBtn><TypeBtn><Icon n="bitmap" /></TypeBtn><TypeBtn><Icon n="half" /></TypeBtn>
                  <TypeBtn><Icon n="maze" /></TypeBtn><TypeBtn><Icon n="hatch" /></TypeBtn>
                </TypeRow>
                <DlgBody>
                  <LeftCol>
                    <PreviewRow>
                      <SquareFill />
                      <PreviewDrop><Caret $w={8} /></PreviewDrop>
                      <PresetInfo>
                        <span>无标题</span>
                        <Icon n="bag" s={14} m="0 0 0 2px" />
                      </PresetInfo>
                    </PreviewRow>
                    <StopsRow><Stop $c="#e2001f" /><Stop $c="#fff" /></StopsRow>
                    <GradBar />
                    <MidTri />
                    <LowRow>
                      <LowBox $w={28} $bg="#fff"><Icon n="cross" s={24} /></LowBox>
                      <LowBox $w={15}><Caret $w={8} $off /></LowBox>
                      <Pad $w={9} />
                      <Dim><Icon n="checker" s={14} /></Dim>
                      <LowField $w={48} $ml={2}><LowFieldText>0 %</LowFieldText><LowFieldPlus><Icon n="plusV" s={11} /></LowFieldPlus></LowField>
                      <Pad $w={6} />
                      <Dim><Icon n="node" s={14} /></Dim>
                      <LowField $w={46} $ml={4}><LowFieldText /><LowFieldPlus><Icon n="plusV" s={11} /></LowFieldPlus></LowField>
                      <Pad $w={9} />
                      <Icon n="tie" s={16} />
                    </LowRow>
                  </LeftCol>
                  <MidCol>
                    <ColHead>调和过渡:</ColHead>
                    <Sub $mt={4}>类型:</Sub>
                    <IconRow $mt={3} $ml={-2}>
                      <SmallBtn><Icon n="checker" s={14} /></SmallBtn>
                      <SmallBtn><Icon n="checker" s={14} /></SmallBtn>
                      <SmallBtn><Icon n="checker" s={14} /></SmallBtn>
                      <SmallBtn $on><Icon n="checker" s={14} /></SmallBtn>
                    </IconRow>
                    <Sub $mt={5}>镜像、重复和反转:</Sub>
                    <IconRow $mt={3} $ml={-3}>
                      <SmallBtn><GradMini /></SmallBtn>
                      <SmallBtn $w={25} $on><StripeMini $n={2} /></SmallBtn>
                      <SmallBtn $w={22}><StripeMini $n={3} /></SmallBtn>
                      <Pad $w={81} />
                      <Icon n="spinCircle" />
                    </IconRow>
                    <Sub $mt={5}>流:</Sub>
                    <IconRow $mt={3}>
                      <SmallBtn $w={16}><Icon n="steps" s={13} /></SmallBtn>
                      <Spin $w={87} $off><SpinText>256</SpinText><SpinBtns $off /></Spin>
                      <Pad $w={4} />
                      <LowBox $w={15} $bg="#f8f8f8"><Icon n="spinCircle" s={11} /></LowBox>
                    </IconRow>
                    <IconRow $mt={4}>
                      <SmallBtn $w={16}><Icon n="flow" s={12} /></SmallBtn>
                      <Spin $w={87}><SpinText>.0</SpinText><SpinPlus><Icon n="plusV" s={12} /></SpinPlus></Spin>
                      <Pad $w={46} />
                      <Icon n="blend" s={14} />
                    </IconRow>
                  </MidCol>
                  <RightCol>
                    <ColHead>变换:</ColHead>
                    <XformWrap>
                      <XformGrid>
                        <Icon n="wArrow" s={14} />
                        <Spin $w={67}><SpinText>100.0 %</SpinText><SpinBtns /></Spin>
                        <LockCell><Icon n="lock" s={11} /></LockCell>
                        <XLabel>X:</XLabel>
                        <Spin $w={68}><SpinText>.0 %</SpinText><SpinBtns /></Spin>
                        <Icon n="hArrow" s={14} />
                        <Spin $w={67}><SpinText>100.0 %</SpinText><SpinBtns /></Spin>
                        <XLabel>Y:</XLabel>
                        <Spin $w={68}><SpinText>.0 %</SpinText><SpinBtns /></Spin>
                        <Icon n="skew" s={14} />
                        <Spin $w={67}><SpinText>.0 °</SpinText><SpinBtns /></Spin>
                        <Pad $w={1} />
                        <Icon n="ang" s={14} m="0 0 0 5px" />
                        <Spin $w={68}><SpinText>.0 °</SpinText><SpinBtns /></Spin>
                      </XformGrid>
                    </XformWrap>
                    <CheckRow $mt={5}><Check />自由缩放和倾斜(F)</CheckRow>
                  </RightCol>
                </DlgBody>
                <DlgFoot>
                  <CheckRow><Check />缠绕填充</CheckRow>
                  <CheckRow $ml={12}><Check />叠印填充(V)</CheckRow>
                  <Grow />
                  <FootBtn>确定</FootBtn>
                  <FootBtn>取消</FootBtn>
                </DlgFoot>
                <Highlight />
              </Dialog>
            </Canvas>
            <VScroll>
              <ScrollUp><Caret $w={8} /></ScrollUp>
              <ScrollThumb>Ⅲ</ScrollThumb>
            </VScroll>
          </CanvasRow>
          <NavRow>
            <Icon n="navAdd" s={11} />
            <Icon n="first" s={10} m="0 0 0 3px" /><Icon n="prev" s={10} m="0 0 0 2px" />
            <TbText $w={31} $ml={6}>1 的 1</TbText>
            <Icon n="next" s={10} m="0 0 0 5px" /><Icon n="last" s={10} m="0 0 0 2px" />
            <Icon n="navAdd" s={11} m="0 0 0 3px" />
            <PageTab>页1</PageTab>
            <HTrack />
            <HArrow><Icon n="left" s={8} /></HArrow>
            <HThumbTrack><HThumb>Ⅲ</HThumb></HThumbTrack>
          </NavRow>
          <DocPal>
            <Icon n="right" s={9} />
            <Pad $w={8} />
            <Icon n="dropper" s={12} />
            <Pad $w={17} />
            <XSwatch />
            {DOC.map(c => <Swatch key={c} $c={c} />)}
          </DocPal>
        </Center>

        <Docker>
          <DockTop><Icon n="cyl" s={9} /></DockTop>
          <DockTab $h={68}><Icon n="pointer" s={11} /><DockText>提示(N)</DockText></DockTab>
          <DockTab $h={77}><Icon n="fill" s={11} m="2px 0 0" /><DockText>对象属性</DockText></DockTab>
          <DockTab $h={85}><Icon n="grid" s={11} m="2px 0 0" /><DockText>对象管理器</DockText></DockTab>
          <DockTab $h={88} $on><Icon n="mirH" s={11} m="5px 0 0" /><DockText>对齐与分布</DockText></DockTab>
          <DockCyl><Icon n="cyl" s={12} /></DockCyl>
        </Docker>

        <Palette>
          <PalTop><Icon n="right" s={9} /><Icon n="tie" s={10} /></PalTop>
          <PalX />
          {PALETTE.map((c, i) => <PalCell key={i} $c={c} />)}
        </Palette>
      </Work>

      <Status>
        <StatusText $w={97}>( 92.713, 108.793 )</StatusText>
        <Icon n="right" s={7} />
        <StatusText $w={100} $ml={27}>曲线 于 图层1</StatusText>
        <Pad $w={982} />
        <Icon n="monitor" s={15} />
        <Pad $w={15} />
        <Icon n="fill" s={13} />
        <Pad $w={1} />
        <StatusSwatch />
        <StatusText $w={30} $ml={4}>渐层</StatusText>
      </Status>
      <Watermarks />
    </App_>
  );
}
